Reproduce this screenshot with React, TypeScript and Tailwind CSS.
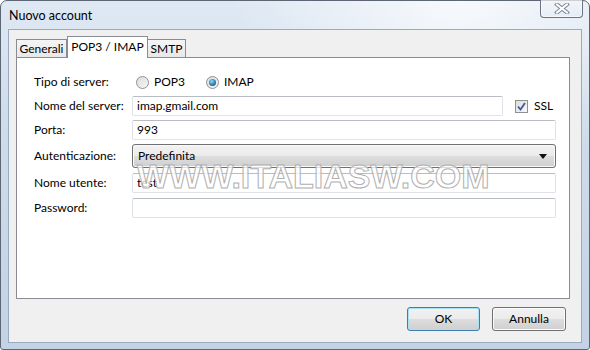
import React from 'react';

// Win7 style "Nuovo account" dialog

type BoxProps = {
  value?: string;
  className?: string;
};

function TextBox({ value = '', className = '' }: BoxProps) {
  return (
    <div
      className={`h-[20px] flex items-center pl-[4px] bg-white border border-[#dfe2e7] border-t-[#b9bcc2] rounded-[2px] text-black ${className}`}
    >
      {value}
    </div>
  );
}

function Radio({ checked }: { checked?: boolean }) {
  return (
    <div className="w-[13px] h-[13px] rounded-full border border-[#8f9091] bg-[linear-gradient(135deg,#dcdcdc,#f6f6f6)] flex items-center justify-center">
      {checked && (
        <div className="w-[7px] h-[7px] rounded-full bg-[radial-gradient(circle_at_40%_35%,#8fdcff,#2a7fb0_55%,#15486b_100%)]" />
      )}
    </div>
  );
}

function Checkbox() {
  return (
    <div className="w-[13px] h-[13px] border border-[#8f9091] bg-[linear-gradient(135deg,#dcdcdc,#f8f8f8)] flex items-center justify-center">
      <svg width="9" height="9" viewBox="0 0 9 9">
        <path d="M1 4.5 L3.5 7.5 L8 1" fill="none" stroke="#3f5b94" strokeWidth="1.8" />
      </svg>
    </div>
  );
}

function Button({ label, isDefault }: { label: string; isDefault?: boolean }) {
  const base =
    'h-[24px] flex items-center justify-center rounded-[3px] text-black bg-[linear-gradient(180deg,#f2f2f2_0%,#ebebeb_48%,#dddddd_52%,#cfcfcf_100%)]';
  if (isDefault) {
    return (
      <div className={`${base} w-[73px] border border-[#3c7fb1] shadow-[inset_0_0_0_1px_#a8e0f6]`}>
        {label}
      </div>
    );
  }
  return (
    <div className={`${base} w-[74px] border border-[#707070] shadow-[inset_0_0_0_1px_#fbfbfb]`}>{label}</div>
  );
}

function Row({ label, children, className = '' }: { label: string; children: React.ReactNode; className?: string }) {
  return (
    <div className={`grid grid-cols-[98px_1fr] items-center ${className}`}>
      <span>{label}</span>
      {children}
    </div>
  );
}

export default function App() {
  return (
    <div className="w-[590px] h-[350px] bg-white overflow-hidden font-['Lato','Noto_Sans',sans-serif] text-[12px] text-black">
      <div className="h-full flex flex-col px-[7px] pb-[6px] rounded-t-[7px] rounded-b-[3px] border border-[#5d6674] bg-[radial-gradient(ellipse_at_78%_0%,rgba(255,255,255,0.75),transparent_35%),linear-gradient(180deg,#dfe9f4_0%,#cfdcea_35%,#c3d3e5_100%)]">
        {/* title bar */}
        <div className="h-[28px] flex items-start justify-between">
          <span className="pt-[6px] pl-[1px] text-[12.5px]">Nuovo account</span>
          <div className="-mr-[1px] -mt-[1px] w-[43px] h-[18px] rounded-b-[4px] border border-[#6b7482] border-t-0 shadow-[inset_0_0_0_1px_rgba(255,255,255,0.55)] bg-[linear-gradient(180deg,rgba(255,255,255,0.3),rgba(220,230,240,0.3))] flex items-center justify-center">
            <svg width="16" height="11" viewBox="0 0 16 11">
              <path d="M3 1.5 L13 9.5 M13 1.5 L3 9.5" stroke="#7b8390" strokeWidth="4" strokeLinecap="square" />
              <path d="M3 1.5 L13 9.5 M13 1.5 L3 9.5" stroke="#ffffff" strokeWidth="2" strokeLinecap="square" />
            </svg>
          </div>
        </div>

        {/* client area */}
        <div className="flex-1 flex flex-col bg-[#f0f0f0] border border-[#9aaabf] pl-[7px] pr-[11px] pt-[6px]">
          {/* tabs */}
          <div className="flex items-end h-[21px] relative z-10">
            <div className="w-[51px] h-[18px] flex items-center justify-center border border-b-0 border-[#898c95] bg-[linear-gradient(180deg,#f5f5f5,#e8e8e8)]">
              Generali
            </div>
            <div className="w-[81px] h-[22px] -mb-px flex items-center justify-center border border-b-0 border-[#898c95] bg-white pb-[2px]">
              POP3 / IMAP
            </div>
            <div className="w-[38px] h-[18px] flex items-center justify-center border border-b-0 border-l-0 border-[#898c95] bg-[linear-gradient(180deg,#f5f5f5,#e8e8e8)]">
              SMTP
            </div>
          </div>

          {/* tab panel */}
          <div className="relative h-[242px] bg-white border border-[#898c95] pl-[17px] pr-[13px] pt-[14px]">
            <Row label="Tipo di server:" className="h-[20px]">
              <div className="flex items-center pl-[4px]">
                <Radio />
                <span className="ml-[5px]">POP3</span>
                <div className="ml-[21px]">
                  <Radio checked />
                </div>
                <span className="ml-[5px]">IMAP</span>
              </div>
            </Row>

            <Row label="Nome del server:" className="mt-[4px]">
              <div className="flex items-center">
                <TextBox value="imap.gmail.com" className="w-[371px]" />
                <div className="ml-[12px]">
                  <Checkbox />
                </div>
                <span className="ml-[6px]">SSL</span>
              </div>
            </Row>

            <Row label="Porta:" className="mt-[4px]">
              <TextBox value="993" />
            </Row>

            <Row label="Autenticazione:" className="mt-[4px]">
              <div className="h-[24px] flex items-center justify-between pl-[5px] pr-[8px] rounded-[3px] border border-[#707070] shadow-[inset_0_0_0_1px_#fafafa] bg-[linear-gradient(180deg,#f2f2f2_0%,#ebebeb_48%,#dddddd_52%,#cfcfcf_100%)]">
                <span>Predefinita</span>
                <svg width="8" height="5" viewBox="0 0 8 5">
                  <path d="M0 0 H8 L4 5 Z" fill="#111" />
                </svg>
              </div>
            </Row>

            <Row label="Nome utente:" className="mt-[5px]">
              <TextBox value="test" />
            </Row>

            <Row label="Password:" className="mt-[5px]">
              <TextBox />
            </Row>

            {/* watermark */}
            <div className="absolute left-[120px] top-[101px] leading-none font-['Liberation_Sans',Arial,sans-serif] font-bold text-[34px] text-white/75 [-webkit-text-stroke:1px_#b0b0b0] pointer-events-none select-none">
              WWW.ITALIASW.COM
            </div>
          </div>

          {/* buttons */}
          <div className="mt-[8px] flex justify-end gap-[12px] pr-[4px]">
            <Button label="OK" isDefault />
            <Button label="Annulla" />
          </div>
        </div>
      </div>
    </div>
  );
}
